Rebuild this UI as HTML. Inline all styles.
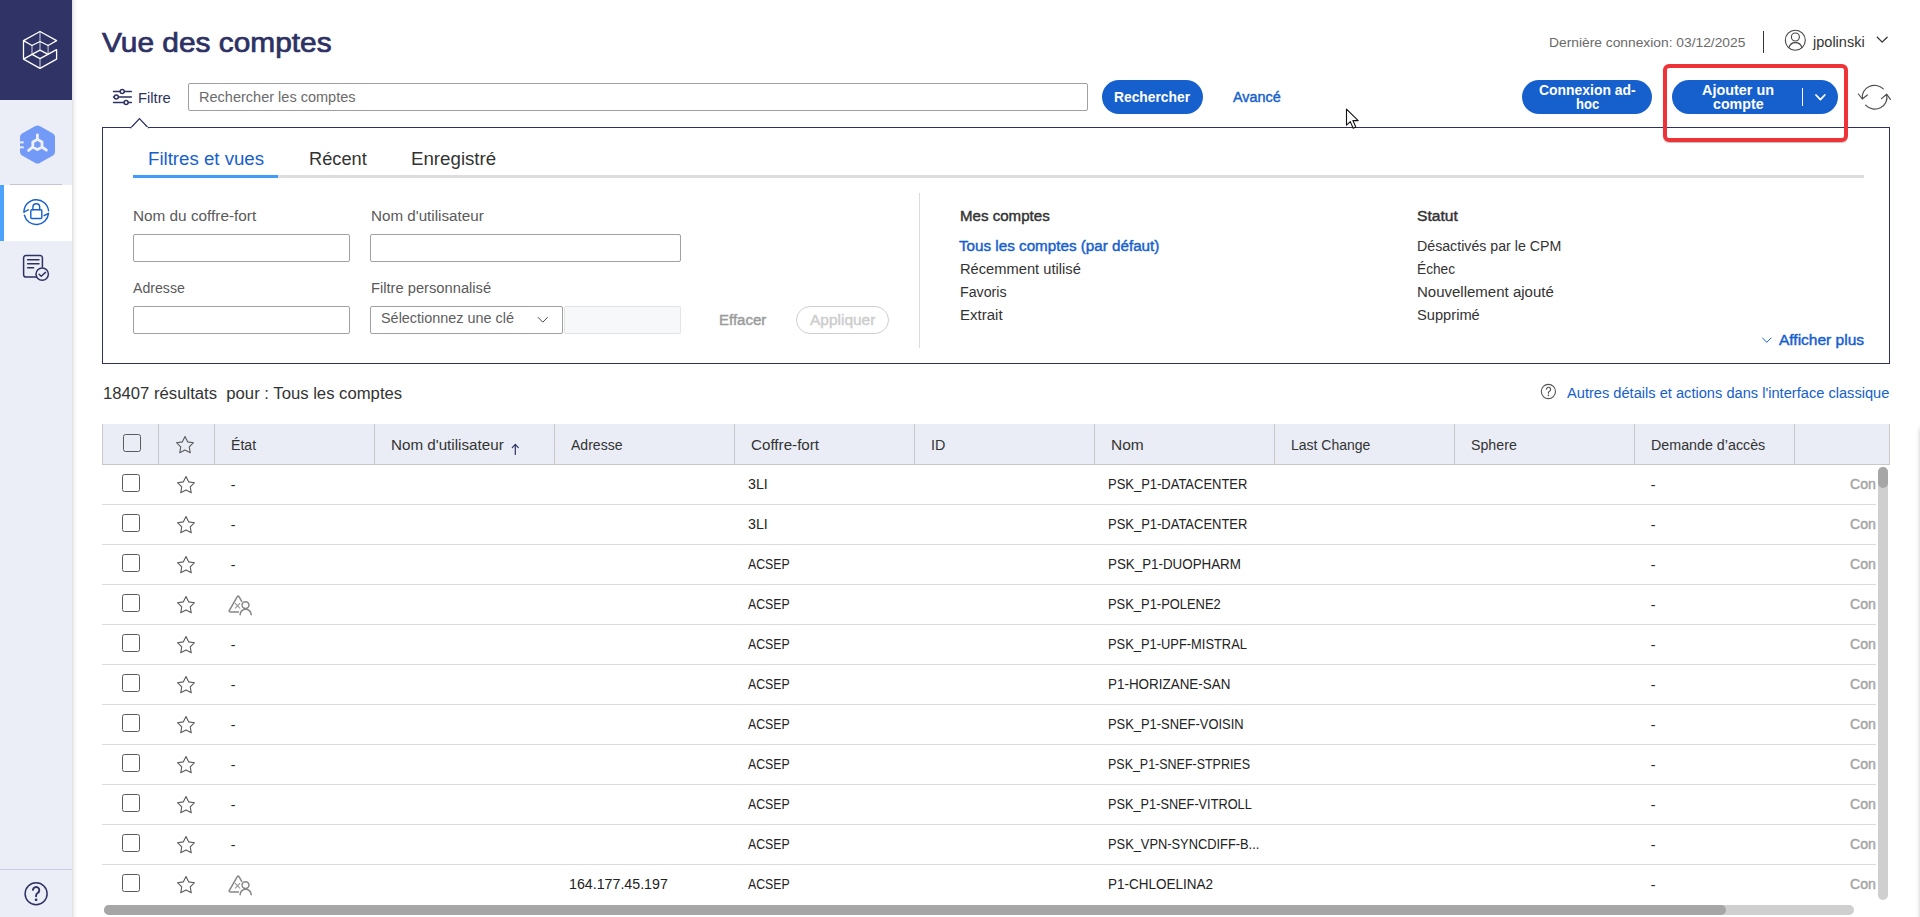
<!DOCTYPE html>
<html><head><meta charset="utf-8"><title>Vue des comptes</title>
<style>
html,body{margin:0;padding:0;width:1920px;height:917px;overflow:hidden;background:#fff;font-family:"Liberation Sans",sans-serif;}
.abs{position:absolute}
.t{position:absolute;white-space:pre;transform-origin:0 0;font-family:"Liberation Sans",sans-serif}
#sb{position:absolute;left:0;top:0;width:72px;height:917px;background:#ebeef7}
#sbtop{position:absolute;left:0;top:0;width:72px;height:100px;background:#2f3366}
#sbshadow{position:absolute;left:72px;top:0;width:5px;height:917px;background:linear-gradient(90deg,rgba(0,0,0,.13),rgba(0,0,0,.04) 50%,rgba(0,0,0,0))}
.inp{box-sizing:border-box;border:1px solid #a0a0a0;border-radius:2px;background:#fff}
.pill{background:#1560cd;border-radius:17px}
.cb{position:absolute;width:18px;height:18px;box-sizing:border-box;border:1.3px solid #5a5a5a;border-radius:2.5px;background:#fff}
.hl{position:absolute;height:1px;background:#dcdcdc;left:102px;width:1774px}
.vd{position:absolute;top:424px;width:1px;height:41px;background:#c8c8c8}
</style></head><body>
<!-- sidebar -->
<div id="sb"></div>
<div id="sbtop"></div>
<div class="abs" style="left:0;top:185px;width:72px;height:56px;background:#fff"></div>
<div class="abs" style="left:0;top:185px;width:4px;height:56px;background:#4da3fb"></div>
<div class="abs" style="left:10px;top:184px;width:52px;height:1px;background:#c3c7d4"></div>
<div class="abs" style="left:0;top:869px;width:72px;height:1px;background:#c9cfe6"></div>
<div id="sbshadow"></div>

<!-- logo -->
<svg class="abs" style="left:0;top:0" width="72" height="100" viewBox="0 0 72 100" fill="none" stroke="#fff" stroke-width="1.3" stroke-linejoin="round" stroke-linecap="round">
<path d="M23.5 40.6L40 31.5L56.6 40.6L48.1 45.5L40 41.5L32 45.5L23.5 40.6V59.1L40 68.4L56.6 59.1V49.6L40 58.6L32 54.4L40 50.2L48.1 54.4M23.5 59.1L32 54.4"/>
<path d="M40 31.5V50.2M32 45.5V54.4M48.1 45.5V54.4M40 58.6V68.4" opacity=".6"/>
</svg>

<!-- hex icon -->
<svg class="abs" style="left:14px;top:118px" width="48" height="52" viewBox="14 118 48 52">
<path d="M34.9 126.3 Q37.5 124.5 40.1 126.3 L53 133.6 Q55 134.8 55 137 L55 152 Q55 154.2 53 155.4 L40.1 162.7 Q37.5 164.5 34.9 162.7 L22 155.4 Q20 154.2 20 152 L20 137 Q20 134.8 22 133.6 Z" fill="#739af6"/>
<rect x="19.5" y="141.4" width="4.2" height="2" fill="#ebeef7"/>
<rect x="19.5" y="146.3" width="4.2" height="2" fill="#ebeef7"/>
<g fill="none" stroke="#eef1fb" stroke-width="2.8" stroke-linecap="round" stroke-linejoin="round">
<path d="M37.4 139.4L42 142V147L37.4 149.6L32.8 147V142Z"/>
<path d="M37.4 139.4V134.8M42 147L46.4 150.2M32.8 147L28.6 150.4"/>
</g>
</svg>

<!-- lock cycle icon -->
<svg class="abs" style="left:20px;top:195px" width="34" height="34" viewBox="20 195 34 34" fill="none" stroke="#1560cd" stroke-width="1.4" stroke-linecap="round" stroke-linejoin="round">
<path d="M24.0 212.2A12.3 12.3 0 0 1 48.55 210.9"/>
<path d="M48.55 213.4A12.3 12.3 0 0 1 24.4 215.3"/>
<path d="M24.1 212.0L28.3 209.8"/>
<path d="M48.5 213.5L44 215.7"/>
<rect x="30.8" y="209.7" width="11" height="8.8" rx="1"/>
<path d="M32.9 209.7V207.2A3.4 3.4 0 0 1 39.7 207.2V209.7"/>
</svg>

<!-- doc check icon -->
<svg class="abs" style="left:20px;top:250px" width="34" height="34" viewBox="20 250 34 34" fill="none" stroke="#2d3163" stroke-width="1.5" stroke-linecap="round" stroke-linejoin="round">
<path d="M36.2 277H25.8A2.2 2.2 0 0 1 23.6 274.8V257.8A2.2 2.2 0 0 1 25.8 255.6H40.2A2.2 2.2 0 0 1 42.4 257.8V267"/>
<path d="M27.6 259.8H39M27.6 263.8H39M27.6 267.8H33.6"/>
<circle cx="42.2" cy="274.1" r="6.2" fill="#ebeef7"/>
<path d="M39.1 274.3L41.2 276.2L45.5 272.4"/>
</svg>

<!-- help icon sidebar -->
<svg class="abs" style="left:20px;top:878px" width="32" height="32" viewBox="20 878 32 32" fill="none" stroke="#2d3163" stroke-width="1.5" stroke-linecap="round">
<circle cx="36.1" cy="893.7" r="11"/>
<path d="M32.9 889.8A3.2 3.2 0 1 1 37.6 893Q36.1 894 36.1 895.6V896.2" stroke-width="1.9"/>
<circle cx="36.1" cy="899.8" r="1.35" fill="#2d3163" stroke="none"/>
</svg>

<!-- filter icon -->
<svg class="abs" style="left:110px;top:86px" width="26" height="22" viewBox="110 86 26 22" fill="none" stroke="#2d3163" stroke-width="1.5" stroke-linecap="round">
<path d="M113.5 91.4H131.4M113.5 97H131.4M113.5 102.5H131.4"/>
<circle cx="122.2" cy="91.4" r="2" fill="#fff"/>
<circle cx="116.3" cy="97" r="2" fill="#fff"/>
<circle cx="126.1" cy="102.5" r="2" fill="#fff"/>
</svg>

<!-- search input -->
<div class="abs inp" style="left:188px;top:83px;width:900px;height:28px;border-color:#a0a0a0"></div>
<!-- buttons -->
<div class="abs pill" style="left:1102px;top:80px;width:101px;height:34px"></div>
<div class="abs pill" style="left:1522px;top:80px;width:130px;height:34px"></div>
<div class="abs pill" style="left:1672px;top:80px;width:166px;height:34px"></div>
<div class="abs" style="left:1802px;top:88px;width:1px;height:18px;background:#fff"></div>
<svg class="abs" style="left:1812px;top:91px" width="16" height="12" viewBox="1812 91 16 12" fill="none" stroke="#fff" stroke-width="1.8" stroke-linecap="round" stroke-linejoin="round"><path d="M1816 95L1820.4 99.6L1824.8 95"/></svg>

<!-- header right -->
<div class="abs" style="left:1763px;top:31px;width:1px;height:22px;background:#333"></div>
<svg class="abs" style="left:1782px;top:27px" width="28" height="28" viewBox="1782 27 28 28" fill="none" stroke="#444" stroke-width="1.1">
<circle cx="1795.3" cy="40.3" r="10"/>
<circle cx="1795.4" cy="37" r="4"/>
<path d="M1789 47.6A6.6 6.6 0 0 1 1801.8 47.6"/>
</svg>
<svg class="abs" style="left:1874px;top:34px" width="16" height="12" viewBox="1874 34 16 12" fill="none" stroke="#333" stroke-width="1.3" stroke-linecap="round" stroke-linejoin="round"><path d="M1877.3 37.2L1882.2 42.1L1887.1 37.2"/></svg>

<!-- refresh -->
<svg class="abs" style="left:1854px;top:80px" width="40" height="34" viewBox="1854 80 40 34" fill="none" stroke="#505050" stroke-width="1.2" stroke-linecap="round" stroke-linejoin="round">
<path d="M1862.4 98.6A12.2 11.6 0 0 1 1883.3 88.9"/>
<path d="M1858.4 94L1862.3 99L1867.3 95"/>
<path d="M1886.6 94.6A12.2 11.6 0 0 1 1865.6 105.1"/>
<path d="M1881.5 98.6L1886.6 94.2L1890.4 99.4"/>
</svg>

<!-- filter panel -->
<div class="abs" style="left:102px;top:127px;width:1786px;height:235px;border:1px solid #2d3163;background:#fff"></div>
<svg class="abs" style="left:128px;top:116px" width="24" height="14" viewBox="128 116 24 14"><path d="M130.5 128.2L139.5 118.6L148.5 128.2" fill="#fff" stroke="#2d3163" stroke-width="1.25"/><rect x="131.6" y="127" width="16.2" height="2" fill="#fff"/></svg>
<div class="abs" style="left:133px;top:175px;width:1731px;height:3px;background:#dddddd"></div>
<div class="abs" style="left:133px;top:175px;width:145px;height:3px;background:#3f9cf7"></div>
<div class="abs inp" style="left:133px;top:234px;width:217px;height:28px"></div>
<div class="abs inp" style="left:370px;top:234px;width:311px;height:28px"></div>
<div class="abs inp" style="left:133px;top:306px;width:217px;height:28px"></div>
<div class="abs" style="left:564px;top:306px;width:117px;height:28px;box-sizing:border-box;border:1px solid #e4e4e4;background:#f7f8fa;border-radius:2px"></div>
<div class="abs inp" style="left:370px;top:306px;width:193px;height:28px"></div>
<svg class="abs" style="left:534px;top:314px" width="18" height="12" viewBox="534 314 18 12" fill="none" stroke="#4a4a4a" stroke-width="1" stroke-linecap="round" stroke-linejoin="round"><path d="M538.2 317.5L542.8 322.2L547.4 317.5"/></svg>
<div class="abs" style="left:796px;top:306px;width:93px;height:28px;box-sizing:border-box;border:1px solid #cfcfcf;border-radius:14px"></div>
<div class="abs" style="left:919px;top:193px;width:1px;height:155px;background:#dcdcdc"></div>
<svg class="abs" style="left:1758px;top:334px" width="18" height="12" viewBox="1758 334 18 12" fill="none" stroke="#1560cd" stroke-width="1" stroke-linecap="round" stroke-linejoin="round"><path d="M1762.5 338L1766.8 342.3L1771.1 338"/></svg>

<!-- help small -->
<svg class="abs" style="left:1538px;top:381px" width="22" height="22" viewBox="1538 381 22 22" fill="none" stroke="#555" stroke-width="1.1" stroke-linecap="round">
<circle cx="1548.4" cy="391.5" r="7.1"/>
<path d="M1546.4 389.2A2.1 2.1 0 1 1 1549.5 391.2Q1548.4 391.9 1548.4 392.9V393.2" stroke-width="1.2"/>
<circle cx="1548.4" cy="395.4" r=".8" fill="#555" stroke="none"/>
</svg>

<!-- red highlight -->
<div class="abs" style="left:1663px;top:64px;width:185px;height:78px;box-sizing:border-box;border:4px solid #ee3338;border-radius:6px;box-shadow:0 1px 1px rgba(0,0,0,.25)"></div>

<!-- cursor -->
<svg class="abs" style="left:1343px;top:106px" width="20" height="26" viewBox="0 0 20 26"><path d="M3.5 3.2V19.2L7.3 15.6L10.2 22.2L12.8 21L9.9 14.6H15.2Z" fill="#fff" stroke="#111" stroke-width="1.1" stroke-linejoin="round"/></svg>
<div class="abs" style="left:102px;top:424px;width:1788px;height:40px;background:#eaedf6"></div>
<div class="abs" style="left:102px;top:464px;width:1788px;height:1px;background:#c8c8c8"></div>
<div class="abs" style="left:102px;top:424px;width:1px;height:40px;background:#c8c8c8"></div>
<div class="abs" style="left:1889px;top:424px;width:1px;height:40px;background:#c8c8c8"></div>
<div class="vd" style="left:158px"></div>
<div class="vd" style="left:214px"></div>
<div class="vd" style="left:374px"></div>
<div class="vd" style="left:554px"></div>
<div class="vd" style="left:734px"></div>
<div class="vd" style="left:914px"></div>
<div class="vd" style="left:1094px"></div>
<div class="vd" style="left:1274px"></div>
<div class="vd" style="left:1454px"></div>
<div class="vd" style="left:1634px"></div>
<div class="vd" style="left:1794px"></div>
<div class="hl" style="top:504px"></div>
<div class="hl" style="top:544px"></div>
<div class="hl" style="top:584px"></div>
<div class="hl" style="top:624px"></div>
<div class="hl" style="top:664px"></div>
<div class="hl" style="top:704px"></div>
<div class="hl" style="top:744px"></div>
<div class="hl" style="top:784px"></div>
<div class="hl" style="top:824px"></div>
<div class="hl" style="top:864px"></div>
<div class="cb" style="left:123px;top:434px;background:transparent"></div>
<svg class="abs" style="left:172.8px;top:433.4px" width="24" height="24" viewBox="-12 -12 24 24"><path d="M0 -8.5L2.6 -3.15L8.5 -2.3L4.25 1.85L5.25 7.75L0 4.95L-5.25 7.75L-4.25 1.85L-8.5 -2.3L-2.6 -3.15Z" fill="none" stroke="#5a5a5a" stroke-width="1.1" stroke-linejoin="round"/></svg>
<div class="cb" style="left:122px;top:474px"></div>
<svg class="abs" style="left:174px;top:473px" width="24" height="24" viewBox="-12 -12 24 24"><path d="M0 -8.5L2.6 -3.15L8.5 -2.3L4.25 1.85L5.25 7.75L0 4.95L-5.25 7.75L-4.25 1.85L-8.5 -2.3L-2.6 -3.15Z" fill="none" stroke="#5a5a5a" stroke-width="1.1" stroke-linejoin="round"/></svg>
<div class="cb" style="left:122px;top:514px"></div>
<svg class="abs" style="left:174px;top:513px" width="24" height="24" viewBox="-12 -12 24 24"><path d="M0 -8.5L2.6 -3.15L8.5 -2.3L4.25 1.85L5.25 7.75L0 4.95L-5.25 7.75L-4.25 1.85L-8.5 -2.3L-2.6 -3.15Z" fill="none" stroke="#5a5a5a" stroke-width="1.1" stroke-linejoin="round"/></svg>
<div class="cb" style="left:122px;top:554px"></div>
<svg class="abs" style="left:174px;top:553px" width="24" height="24" viewBox="-12 -12 24 24"><path d="M0 -8.5L2.6 -3.15L8.5 -2.3L4.25 1.85L5.25 7.75L0 4.95L-5.25 7.75L-4.25 1.85L-8.5 -2.3L-2.6 -3.15Z" fill="none" stroke="#5a5a5a" stroke-width="1.1" stroke-linejoin="round"/></svg>
<div class="cb" style="left:122px;top:594px"></div>
<svg class="abs" style="left:174px;top:593px" width="24" height="24" viewBox="-12 -12 24 24"><path d="M0 -8.5L2.6 -3.15L8.5 -2.3L4.25 1.85L5.25 7.75L0 4.95L-5.25 7.75L-4.25 1.85L-8.5 -2.3L-2.6 -3.15Z" fill="none" stroke="#5a5a5a" stroke-width="1.1" stroke-linejoin="round"/></svg>
<svg class="abs" style="left:225px;top:592px" width="30" height="24" viewBox="225 592 30 24" fill="none" stroke="#858585" stroke-width="1.5" stroke-linecap="round" stroke-linejoin="round">
<path d="M238.4 611.9H230.3Q228.5 611.9 229.4 610.3L237.3 596.7Q238.15 595.3 239 596.7L241.7 601.3"/>
<path d="M235.3 603.5L239.8 608.1M239.8 603.5L235.3 608.1" stroke-width="1.1" stroke="#9a9a9a"/>
<circle cx="245.5" cy="605.1" r="3.45"/>
<path d="M240.1 614.8A5.55 5.55 0 0 1 251.2 614.8"/>
</svg>
<div class="cb" style="left:122px;top:634px"></div>
<svg class="abs" style="left:174px;top:633px" width="24" height="24" viewBox="-12 -12 24 24"><path d="M0 -8.5L2.6 -3.15L8.5 -2.3L4.25 1.85L5.25 7.75L0 4.95L-5.25 7.75L-4.25 1.85L-8.5 -2.3L-2.6 -3.15Z" fill="none" stroke="#5a5a5a" stroke-width="1.1" stroke-linejoin="round"/></svg>
<div class="cb" style="left:122px;top:674px"></div>
<svg class="abs" style="left:174px;top:673px" width="24" height="24" viewBox="-12 -12 24 24"><path d="M0 -8.5L2.6 -3.15L8.5 -2.3L4.25 1.85L5.25 7.75L0 4.95L-5.25 7.75L-4.25 1.85L-8.5 -2.3L-2.6 -3.15Z" fill="none" stroke="#5a5a5a" stroke-width="1.1" stroke-linejoin="round"/></svg>
<div class="cb" style="left:122px;top:714px"></div>
<svg class="abs" style="left:174px;top:713px" width="24" height="24" viewBox="-12 -12 24 24"><path d="M0 -8.5L2.6 -3.15L8.5 -2.3L4.25 1.85L5.25 7.75L0 4.95L-5.25 7.75L-4.25 1.85L-8.5 -2.3L-2.6 -3.15Z" fill="none" stroke="#5a5a5a" stroke-width="1.1" stroke-linejoin="round"/></svg>
<div class="cb" style="left:122px;top:754px"></div>
<svg class="abs" style="left:174px;top:753px" width="24" height="24" viewBox="-12 -12 24 24"><path d="M0 -8.5L2.6 -3.15L8.5 -2.3L4.25 1.85L5.25 7.75L0 4.95L-5.25 7.75L-4.25 1.85L-8.5 -2.3L-2.6 -3.15Z" fill="none" stroke="#5a5a5a" stroke-width="1.1" stroke-linejoin="round"/></svg>
<div class="cb" style="left:122px;top:794px"></div>
<svg class="abs" style="left:174px;top:793px" width="24" height="24" viewBox="-12 -12 24 24"><path d="M0 -8.5L2.6 -3.15L8.5 -2.3L4.25 1.85L5.25 7.75L0 4.95L-5.25 7.75L-4.25 1.85L-8.5 -2.3L-2.6 -3.15Z" fill="none" stroke="#5a5a5a" stroke-width="1.1" stroke-linejoin="round"/></svg>
<div class="cb" style="left:122px;top:834px"></div>
<svg class="abs" style="left:174px;top:833px" width="24" height="24" viewBox="-12 -12 24 24"><path d="M0 -8.5L2.6 -3.15L8.5 -2.3L4.25 1.85L5.25 7.75L0 4.95L-5.25 7.75L-4.25 1.85L-8.5 -2.3L-2.6 -3.15Z" fill="none" stroke="#5a5a5a" stroke-width="1.1" stroke-linejoin="round"/></svg>
<div class="cb" style="left:122px;top:874px"></div>
<svg class="abs" style="left:174px;top:873px" width="24" height="24" viewBox="-12 -12 24 24"><path d="M0 -8.5L2.6 -3.15L8.5 -2.3L4.25 1.85L5.25 7.75L0 4.95L-5.25 7.75L-4.25 1.85L-8.5 -2.3L-2.6 -3.15Z" fill="none" stroke="#5a5a5a" stroke-width="1.1" stroke-linejoin="round"/></svg>
<svg class="abs" style="left:225px;top:872px" width="30" height="24" viewBox="225 592 30 24" fill="none" stroke="#858585" stroke-width="1.5" stroke-linecap="round" stroke-linejoin="round">
<path d="M238.4 611.9H230.3Q228.5 611.9 229.4 610.3L237.3 596.7Q238.15 595.3 239 596.7L241.7 601.3"/>
<path d="M235.3 603.5L239.8 608.1M239.8 603.5L235.3 608.1" stroke-width="1.1" stroke="#9a9a9a"/>
<circle cx="245.5" cy="605.1" r="3.45"/>
<path d="M240.1 614.8A5.55 5.55 0 0 1 251.2 614.8"/>
</svg>
<svg class="abs" style="left:508px;top:441px" width="14" height="16" viewBox="508 441 14 16" fill="none" stroke="#2d3163" stroke-width="1.2" stroke-linecap="round" stroke-linejoin="round"><path d="M515.3 454.4V444.4M512.3 447.6L515.3 444.3L518.3 447.6"/></svg>
<div class="abs" style="left:1878px;top:467px;width:10px;height:433px;background:#cfcfcf;border-radius:5px"></div>
<div class="abs" style="left:1878px;top:467px;width:10px;height:21px;background:#a6a6a6;border-radius:5px"></div>
<div class="abs" style="left:104px;top:905px;width:1750px;height:10px;background:#cfcfcf;border-radius:5px"></div>
<div class="abs" style="left:104px;top:905px;width:1622px;height:10px;background:#a6a6a6;border-radius:5px"></div>
<div class="abs" style="left:1921px;top:428px;width:20px;height:520px;background:#ccc;box-shadow:0 0 5px rgba(0,0,0,.32)"></div>
<span class="t" style="left:102.00px;top:30.2px;font-size:27px;line-height:27px;font-weight:normal;color:#2d3163;transform:scaleX(1.1057);-webkit-text-stroke:0.7px #2d3163;">Vue des comptes</span>
<span class="t" style="left:138.14px;top:91px;font-size:14px;line-height:14px;font-weight:normal;color:#2d3163;transform:scaleX(1.0553);">Filtre</span>
<span class="t" style="left:198.76px;top:90px;font-size:14px;line-height:14px;font-weight:normal;color:#6b6b6b;transform:scaleX(1.0370);">Rechercher les comptes</span>
<span class="t" style="left:1113.80px;top:90px;font-size:14px;line-height:14px;font-weight:bold;color:#ffffff;transform:scaleX(0.9869);">Rechercher</span>
<span class="t" style="left:1233.30px;top:90px;font-size:14px;line-height:14px;font-weight:normal;color:#1560cd;transform:scaleX(1.0288);-webkit-text-stroke:0.4px #1560cd;">Avancé</span>
<span class="t" style="left:1549.09px;top:36px;font-size:13px;line-height:13px;font-weight:normal;color:#6a6a6a;transform:scaleX(1.0612);">Dernière connexion: 03/12/2025</span>
<span class="t" style="left:1813.24px;top:35px;font-size:14px;line-height:14px;font-weight:normal;color:#333;transform:scaleX(1.0381);">jpolinski</span>
<span class="t" style="left:1539.00px;top:83px;font-size:14px;line-height:14px;font-weight:bold;color:#fff;transform:scaleX(0.9943);">Connexion ad-</span>
<span class="t" style="left:1576.00px;top:97px;font-size:14px;line-height:14px;font-weight:bold;color:#fff;transform:scaleX(0.9321);">hoc</span>
<span class="t" style="left:1702.00px;top:83px;font-size:14px;line-height:14px;font-weight:bold;color:#fff;transform:scaleX(1.0296);">Ajouter un</span>
<span class="t" style="left:1712.50px;top:97px;font-size:14px;line-height:14px;font-weight:bold;color:#fff;transform:scaleX(1.0160);">compte</span>
<span class="t" style="left:147.56px;top:150px;font-size:18px;line-height:18px;font-weight:normal;color:#1560cd;transform:scaleX(1.0357);">Filtres et vues</span>
<span class="t" style="left:308.69px;top:150px;font-size:18px;line-height:18px;font-weight:normal;color:#333;transform:scaleX(1.0123);">Récent</span>
<span class="t" style="left:410.86px;top:150px;font-size:18px;line-height:18px;font-weight:normal;color:#333;transform:scaleX(1.0384);">Enregistré</span>
<span class="t" style="left:133.31px;top:209px;font-size:14px;line-height:14px;font-weight:normal;color:#5a5a5a;transform:scaleX(1.0943);">Nom du coffre-fort</span>
<span class="t" style="left:370.71px;top:209px;font-size:14px;line-height:14px;font-weight:normal;color:#5a5a5a;transform:scaleX(1.0857);">Nom d'utilisateur</span>
<span class="t" style="left:133.40px;top:281px;font-size:14px;line-height:14px;font-weight:normal;color:#5a5a5a;transform:scaleX(1.0083);">Adresse</span>
<span class="t" style="left:370.75px;top:281px;font-size:14px;line-height:14px;font-weight:normal;color:#5a5a5a;transform:scaleX(1.0502);">Filtre personnalisé</span>
<span class="t" style="left:381.40px;top:311px;font-size:14px;line-height:14px;font-weight:normal;color:#5e5e5e;transform:scaleX(1.0293);">Sélectionnez une clé</span>
<span class="t" style="left:718.53px;top:313px;font-size:14px;line-height:14px;font-weight:normal;color:#9a9a9a;transform:scaleX(1.0728);-webkit-text-stroke:0.4px #9a9a9a;">Effacer</span>
<span class="t" style="left:809.60px;top:313px;font-size:14px;line-height:14px;font-weight:normal;color:#cdcdcd;transform:scaleX(1.1044);-webkit-text-stroke:0.4px #cdcdcd;">Appliquer</span>
<span class="t" style="left:959.92px;top:209px;font-size:14px;line-height:14px;font-weight:normal;color:#333;transform:scaleX(1.0772);-webkit-text-stroke:0.4px #333;">Mes comptes</span>
<span class="t" style="left:959.40px;top:239px;font-size:14px;line-height:14px;font-weight:normal;color:#1560cd;transform:scaleX(1.0864);-webkit-text-stroke:0.4px #1560cd;">Tous les comptes (par défaut)</span>
<span class="t" style="left:959.95px;top:262px;font-size:14px;line-height:14px;font-weight:normal;color:#333;transform:scaleX(1.0493);">Récemment utilisé</span>
<span class="t" style="left:959.98px;top:285px;font-size:14px;line-height:14px;font-weight:normal;color:#333;transform:scaleX(1.0157);">Favoris</span>
<span class="t" style="left:959.93px;top:308px;font-size:14px;line-height:14px;font-weight:normal;color:#333;transform:scaleX(1.0725);">Extrait</span>
<span class="t" style="left:1417.00px;top:209px;font-size:14px;line-height:14px;font-weight:normal;color:#333;transform:scaleX(1.1175);-webkit-text-stroke:0.4px #333;">Statut</span>
<span class="t" style="left:1416.99px;top:239px;font-size:14px;line-height:14px;font-weight:normal;color:#333;transform:scaleX(1.0134);">Désactivés par le CPM</span>
<span class="t" style="left:1417.02px;top:262px;font-size:14px;line-height:14px;font-weight:normal;color:#333;transform:scaleX(0.9786);">Échec</span>
<span class="t" style="left:1416.93px;top:285px;font-size:14px;line-height:14px;font-weight:normal;color:#333;transform:scaleX(1.0714);">Nouvellement ajouté</span>
<span class="t" style="left:1417.00px;top:308px;font-size:14px;line-height:14px;font-weight:normal;color:#333;transform:scaleX(1.0477);">Supprimé</span>
<span class="t" style="left:1779.00px;top:333px;font-size:14px;line-height:14px;font-weight:normal;color:#1560cd;transform:scaleX(1.1070);-webkit-text-stroke:0.4px #1560cd;">Afficher plus</span>
<span class="t" style="left:102.76px;top:386px;font-size:16px;line-height:16px;font-weight:normal;color:#333;transform:scaleX(1.0424);">18407 résultats  pour : Tous les comptes</span>
<span class="t" style="left:1566.90px;top:386px;font-size:14px;line-height:14px;font-weight:normal;color:#1560cd;transform:scaleX(1.0450);">Autres détails et actions dans l'interface classique</span>
<span class="t" style="left:231.39px;top:438px;font-size:14px;line-height:14px;font-weight:normal;color:#333;transform:scaleX(1.0078);">État</span>
<span class="t" style="left:391.31px;top:438px;font-size:14px;line-height:14px;font-weight:normal;color:#333;transform:scaleX(1.0857);">Nom d'utilisateur</span>
<span class="t" style="left:571.10px;top:438px;font-size:14px;line-height:14px;font-weight:normal;color:#333;transform:scaleX(1.0025);">Adresse</span>
<span class="t" style="left:751.40px;top:438px;font-size:14px;line-height:14px;font-weight:normal;color:#333;transform:scaleX(1.0848);">Coffre-fort</span>
<span class="t" style="left:931.18px;top:438px;font-size:14px;line-height:14px;font-weight:normal;color:#333;transform:scaleX(1.0241);">ID</span>
<span class="t" style="left:1110.99px;top:438px;font-size:14px;line-height:14px;font-weight:normal;color:#333;transform:scaleX(1.1077);">Nom</span>
<span class="t" style="left:1291.40px;top:438px;font-size:14px;line-height:14px;font-weight:normal;color:#333;transform:scaleX(0.9999);">Last Change</span>
<span class="t" style="left:1471.00px;top:438px;font-size:14px;line-height:14px;font-weight:normal;color:#333;transform:scaleX(1.0141);">Sphere</span>
<span class="t" style="left:1651.38px;top:438px;font-size:14px;line-height:14px;font-weight:normal;color:#333;transform:scaleX(1.0193);">Demande d’accès</span>
<span class="t" style="left:230.70px;top:478px;font-size:14px;line-height:14px;font-weight:normal;color:#222;transform:scaleX(1.0000);">-</span>
<span class="t" style="left:748.20px;top:477px;font-size:14px;line-height:14px;font-weight:normal;color:#222;transform:scaleX(1.0123);">3LI</span>
<span class="t" style="left:1108.37px;top:477px;font-size:14px;line-height:14px;font-weight:normal;color:#222;transform:scaleX(0.9264);">PSK_P1-DATACENTER</span>
<span class="t" style="left:1650.70px;top:478px;font-size:14px;line-height:14px;font-weight:normal;color:#222;transform:scaleX(1.0000);">-</span>
<span class="t" style="left:1850.10px;top:477px;font-size:14px;line-height:14px;font-weight:normal;color:#a3a3a3;transform:scaleX(1.0082);-webkit-text-stroke:0.4px #a3a3a3;">Con</span>
<span class="t" style="left:230.70px;top:518px;font-size:14px;line-height:14px;font-weight:normal;color:#222;transform:scaleX(1.0000);">-</span>
<span class="t" style="left:748.20px;top:517px;font-size:14px;line-height:14px;font-weight:normal;color:#222;transform:scaleX(1.0123);">3LI</span>
<span class="t" style="left:1108.37px;top:517px;font-size:14px;line-height:14px;font-weight:normal;color:#222;transform:scaleX(0.9264);">PSK_P1-DATACENTER</span>
<span class="t" style="left:1650.70px;top:518px;font-size:14px;line-height:14px;font-weight:normal;color:#222;transform:scaleX(1.0000);">-</span>
<span class="t" style="left:1850.10px;top:517px;font-size:14px;line-height:14px;font-weight:normal;color:#a3a3a3;transform:scaleX(1.0082);-webkit-text-stroke:0.4px #a3a3a3;">Con</span>
<span class="t" style="left:230.70px;top:558px;font-size:14px;line-height:14px;font-weight:normal;color:#222;transform:scaleX(1.0000);">-</span>
<span class="t" style="left:748.20px;top:557px;font-size:14px;line-height:14px;font-weight:normal;color:#222;transform:scaleX(0.8764);">ACSEP</span>
<span class="t" style="left:1108.35px;top:557px;font-size:14px;line-height:14px;font-weight:normal;color:#222;transform:scaleX(0.9543);">PSK_P1-DUOPHARM</span>
<span class="t" style="left:1650.70px;top:558px;font-size:14px;line-height:14px;font-weight:normal;color:#222;transform:scaleX(1.0000);">-</span>
<span class="t" style="left:1850.10px;top:557px;font-size:14px;line-height:14px;font-weight:normal;color:#a3a3a3;transform:scaleX(1.0082);-webkit-text-stroke:0.4px #a3a3a3;">Con</span>
<span class="t" style="left:748.20px;top:597px;font-size:14px;line-height:14px;font-weight:normal;color:#222;transform:scaleX(0.8764);">ACSEP</span>
<span class="t" style="left:1108.38px;top:597px;font-size:14px;line-height:14px;font-weight:normal;color:#222;transform:scaleX(0.9227);">PSK_P1-POLENE2</span>
<span class="t" style="left:1650.70px;top:598px;font-size:14px;line-height:14px;font-weight:normal;color:#222;transform:scaleX(1.0000);">-</span>
<span class="t" style="left:1850.10px;top:597px;font-size:14px;line-height:14px;font-weight:normal;color:#a3a3a3;transform:scaleX(1.0082);-webkit-text-stroke:0.4px #a3a3a3;">Con</span>
<span class="t" style="left:230.70px;top:638px;font-size:14px;line-height:14px;font-weight:normal;color:#222;transform:scaleX(1.0000);">-</span>
<span class="t" style="left:748.20px;top:637px;font-size:14px;line-height:14px;font-weight:normal;color:#222;transform:scaleX(0.8764);">ACSEP</span>
<span class="t" style="left:1108.38px;top:637px;font-size:14px;line-height:14px;font-weight:normal;color:#222;transform:scaleX(0.9205);">PSK_P1-UPF-MISTRAL</span>
<span class="t" style="left:1650.70px;top:638px;font-size:14px;line-height:14px;font-weight:normal;color:#222;transform:scaleX(1.0000);">-</span>
<span class="t" style="left:1850.10px;top:637px;font-size:14px;line-height:14px;font-weight:normal;color:#a3a3a3;transform:scaleX(1.0082);-webkit-text-stroke:0.4px #a3a3a3;">Con</span>
<span class="t" style="left:230.70px;top:678px;font-size:14px;line-height:14px;font-weight:normal;color:#222;transform:scaleX(1.0000);">-</span>
<span class="t" style="left:748.20px;top:677px;font-size:14px;line-height:14px;font-weight:normal;color:#222;transform:scaleX(0.8764);">ACSEP</span>
<span class="t" style="left:1108.34px;top:677px;font-size:14px;line-height:14px;font-weight:normal;color:#222;transform:scaleX(0.9597);">P1-HORIZANE-SAN</span>
<span class="t" style="left:1650.70px;top:678px;font-size:14px;line-height:14px;font-weight:normal;color:#222;transform:scaleX(1.0000);">-</span>
<span class="t" style="left:1850.10px;top:677px;font-size:14px;line-height:14px;font-weight:normal;color:#a3a3a3;transform:scaleX(1.0082);-webkit-text-stroke:0.4px #a3a3a3;">Con</span>
<span class="t" style="left:230.70px;top:718px;font-size:14px;line-height:14px;font-weight:normal;color:#222;transform:scaleX(1.0000);">-</span>
<span class="t" style="left:748.20px;top:717px;font-size:14px;line-height:14px;font-weight:normal;color:#222;transform:scaleX(0.8764);">ACSEP</span>
<span class="t" style="left:1108.38px;top:717px;font-size:14px;line-height:14px;font-weight:normal;color:#222;transform:scaleX(0.9218);">PSK_P1-SNEF-VOISIN</span>
<span class="t" style="left:1650.70px;top:718px;font-size:14px;line-height:14px;font-weight:normal;color:#222;transform:scaleX(1.0000);">-</span>
<span class="t" style="left:1850.10px;top:717px;font-size:14px;line-height:14px;font-weight:normal;color:#a3a3a3;transform:scaleX(1.0082);-webkit-text-stroke:0.4px #a3a3a3;">Con</span>
<span class="t" style="left:230.70px;top:758px;font-size:14px;line-height:14px;font-weight:normal;color:#222;transform:scaleX(1.0000);">-</span>
<span class="t" style="left:748.20px;top:757px;font-size:14px;line-height:14px;font-weight:normal;color:#222;transform:scaleX(0.8764);">ACSEP</span>
<span class="t" style="left:1108.41px;top:757px;font-size:14px;line-height:14px;font-weight:normal;color:#222;transform:scaleX(0.8903);">PSK_P1-SNEF-STPRIES</span>
<span class="t" style="left:1650.70px;top:758px;font-size:14px;line-height:14px;font-weight:normal;color:#222;transform:scaleX(1.0000);">-</span>
<span class="t" style="left:1850.10px;top:757px;font-size:14px;line-height:14px;font-weight:normal;color:#a3a3a3;transform:scaleX(1.0082);-webkit-text-stroke:0.4px #a3a3a3;">Con</span>
<span class="t" style="left:230.70px;top:798px;font-size:14px;line-height:14px;font-weight:normal;color:#222;transform:scaleX(1.0000);">-</span>
<span class="t" style="left:748.20px;top:797px;font-size:14px;line-height:14px;font-weight:normal;color:#222;transform:scaleX(0.8764);">ACSEP</span>
<span class="t" style="left:1108.39px;top:797px;font-size:14px;line-height:14px;font-weight:normal;color:#222;transform:scaleX(0.9100);">PSK_P1-SNEF-VITROLL</span>
<span class="t" style="left:1650.70px;top:798px;font-size:14px;line-height:14px;font-weight:normal;color:#222;transform:scaleX(1.0000);">-</span>
<span class="t" style="left:1850.10px;top:797px;font-size:14px;line-height:14px;font-weight:normal;color:#a3a3a3;transform:scaleX(1.0082);-webkit-text-stroke:0.4px #a3a3a3;">Con</span>
<span class="t" style="left:230.70px;top:838px;font-size:14px;line-height:14px;font-weight:normal;color:#222;transform:scaleX(1.0000);">-</span>
<span class="t" style="left:748.20px;top:837px;font-size:14px;line-height:14px;font-weight:normal;color:#222;transform:scaleX(0.8764);">ACSEP</span>
<span class="t" style="left:1108.38px;top:837px;font-size:14px;line-height:14px;font-weight:normal;color:#222;transform:scaleX(0.9176);">PSK_VPN-SYNCDIFF-B...</span>
<span class="t" style="left:1650.70px;top:838px;font-size:14px;line-height:14px;font-weight:normal;color:#222;transform:scaleX(1.0000);">-</span>
<span class="t" style="left:1850.10px;top:837px;font-size:14px;line-height:14px;font-weight:normal;color:#a3a3a3;transform:scaleX(1.0082);-webkit-text-stroke:0.4px #a3a3a3;">Con</span>
<span class="t" style="left:568.58px;top:877px;font-size:14px;line-height:14px;font-weight:normal;color:#222;transform:scaleX(1.0152);">164.177.45.197</span>
<span class="t" style="left:748.20px;top:877px;font-size:14px;line-height:14px;font-weight:normal;color:#222;transform:scaleX(0.8764);">ACSEP</span>
<span class="t" style="left:1108.34px;top:877px;font-size:14px;line-height:14px;font-weight:normal;color:#222;transform:scaleX(0.9635);">P1-CHLOELINA2</span>
<span class="t" style="left:1650.70px;top:878px;font-size:14px;line-height:14px;font-weight:normal;color:#222;transform:scaleX(1.0000);">-</span>
<span class="t" style="left:1850.10px;top:877px;font-size:14px;line-height:14px;font-weight:normal;color:#a3a3a3;transform:scaleX(1.0082);-webkit-text-stroke:0.4px #a3a3a3;">Con</span>
</body></html>
